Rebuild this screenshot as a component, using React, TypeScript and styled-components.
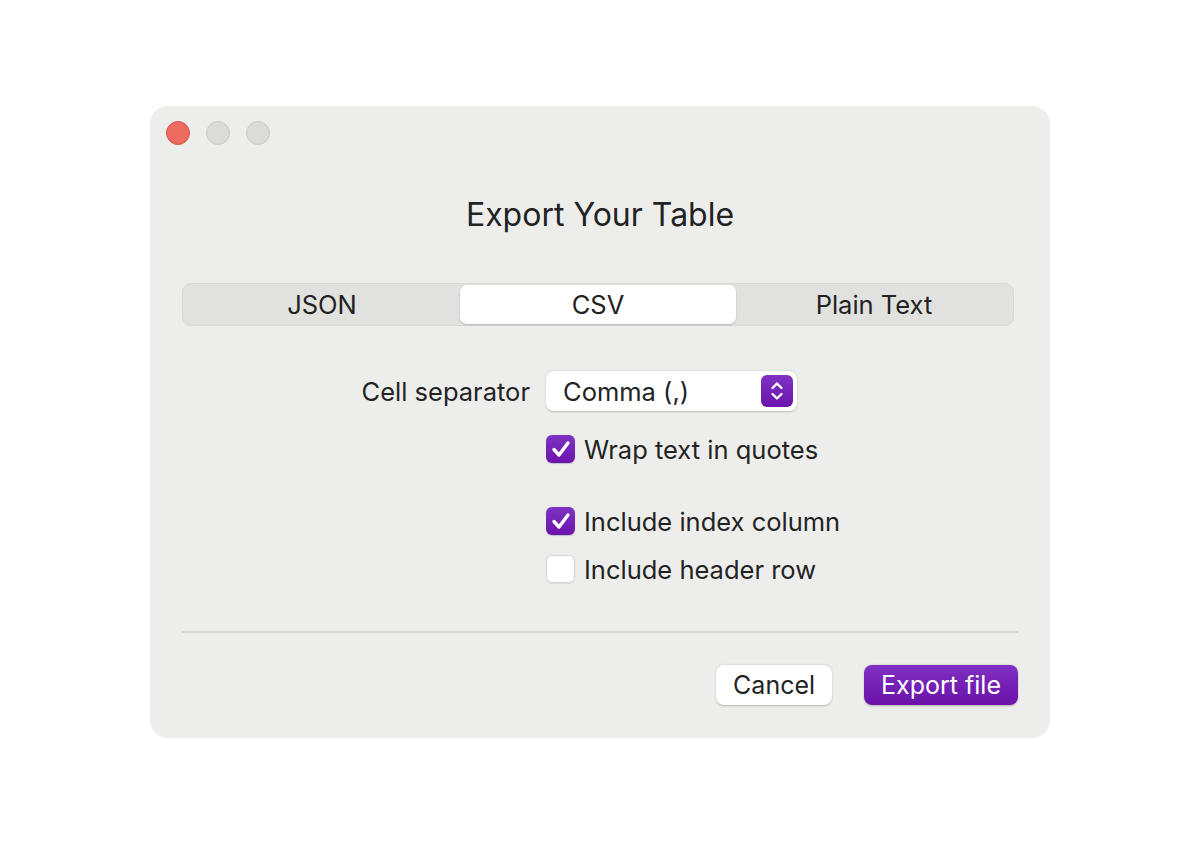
import React, { useState } from "react";
import styled, { createGlobalStyle } from "styled-components";

const Global = createGlobalStyle`
  html, body { margin: 0; padding: 0; background: #ffffff; }
  body { font-family: Inter, "Liberation Sans", sans-serif; color: #232323; }
  * { box-sizing: border-box; }
`;

const Page = styled.div`
  width: 1200px;
  height: 843px;
  display: flex;
  justify-content: center;
  padding-top: 106px;
`;

const Window = styled.div`
  width: 900px;
  height: 632px;
  background: #edeeec;
  border-radius: 18px;
  display: flex;
  flex-direction: column;
  padding: 15px 32px 0 32px;
`;

const TitleBar = styled.div`
  display: flex;
  gap: 16px;
  margin-left: -16px;
`;

const Light = styled.div<{ $color: string; $border: string }>`
  width: 24px;
  height: 24px;
  border-radius: 50%;
  background: ${(p) => p.$color};
  border: 1px solid ${(p) => p.$border};
`;

const Title = styled.h1`
  margin: 52px 0 0 0;
  text-align: center;
  font-size: 32px;
  font-weight: 400;
  line-height: 36px;
  color: #222;
`;

const Segmented = styled.div`
  margin-top: 50px;
  margin-right: 4px;
  height: 43px;
  background: #e1e2e0;
  border: 1px solid #d8d9d7;
  border-radius: 9px;
  display: grid;
  grid-template-columns: 1fr 1fr 1fr;
  padding: 1px;
`;

const Segment = styled.div<{ $active?: boolean }>`
  display: flex;
  align-items: center;
  justify-content: center;
  font-size: 25.5px;
  color: #222;
  border-radius: 7px;
  background: ${(p) => (p.$active ? "#ffffff" : "transparent")};
  box-shadow: ${(p) => (p.$active ? "0 1px 2px rgba(0,0,0,0.18)" : "none")};
  cursor: pointer;
`;

const Form = styled.div`
  margin-top: 45px;
  display: grid;
  grid-template-columns: 348px auto;
  column-gap: 16px;
  align-items: center;
`;

const Label = styled.div`
  font-size: 25.5px;
  text-align: right;
`;

const Select = styled.div`
  width: 251px;
  height: 40px;
  background: #fff;
  border-radius: 8px;
  box-shadow: 0 0.5px 2px rgba(0, 0, 0, 0.22);
  display: flex;
  align-items: center;
  justify-content: space-between;
  padding: 0 4px 0 17px;
  font-size: 25.5px;
`;

const Stepper = styled.div`
  width: 32px;
  height: 32px;
  border-radius: 6px;
  background: linear-gradient(#8032c4, #6c14ab);
  display: flex;
  align-items: center;
  justify-content: center;
`;

const Checks = styled.div`
  grid-column: 2;
  display: flex;
  flex-direction: column;
  margin-top: 24px;
`;

const CheckRow = styled.label<{ $gap?: number }>`
  display: flex;
  align-items: center;
  gap: 9px;
  height: 28px;
  margin-top: ${(p) => p.$gap ?? 0}px;
  font-size: 25.5px;
  cursor: pointer;
`;

const Box = styled.span<{ $on: boolean }>`
  width: 29px;
  height: 28px;
  border-radius: 6px;
  display: flex;
  align-items: center;
  justify-content: center;
  background: ${(p) => (p.$on ? "linear-gradient(#8032c4, #6c14ab)" : "#fff")};
  box-shadow: ${(p) =>
    p.$on ? "0 0.5px 1px rgba(0,0,0,0.2)" : "inset 0 0 0 1px #d4d5d3, 0 0.5px 1px rgba(0,0,0,0.08)"};
`;

const Divider = styled.hr`
  margin: 48px 0 0 0;
  border: 0;
  height: 2px;
  background: #d9dad8;
  width: 836px;
`;

const Footer = styled.div`
  display: flex;
  justify-content: flex-end;
  gap: 32px;
  margin-top: 32px;
`;

const Button = styled.button<{ $primary?: boolean }>`
  height: 40px;
  padding: 0 17px;
  border: 0;
  border-radius: 8px;
  font-family: inherit;
  font-size: 25px;
  color: ${(p) => (p.$primary ? "#fff" : "#222")};
  background: ${(p) => (p.$primary ? "linear-gradient(#7f30c2, #6a12a8)" : "#fff")};
  box-shadow: 0 0.5px 2px rgba(0, 0, 0, 0.25);
  cursor: pointer;
`;

const Check = () => (
  <svg width="20" height="18" viewBox="0 0 20 18">
    <path d="M3 9.5 L8 15 L17 3" fill="none" stroke="#fff" strokeWidth="3.4" strokeLinecap="round" strokeLinejoin="round" />
  </svg>
);

const Chevrons = () => (
  <svg width="16" height="24" viewBox="0 0 16 24">
    <path d="M3.5 9 L8 4.5 L12.5 9 M3.5 15 L8 19.5 L12.5 15" fill="none" stroke="#fff" strokeWidth="2.4" strokeLinecap="round" strokeLinejoin="round" />
  </svg>
);

export default function App() {
  const [tab, setTab] = useState("CSV");
  const [opts, setOpts] = useState({ wrap: true, index: true, header: false });
  const toggle = (k: keyof typeof opts) => setOpts({ ...opts, [k]: !opts[k] });
  return (
    <>
      <Global />
      <Page>
        <Window>
          <TitleBar>
            <Light $color="#ec6a5e" $border="#d6574c" />
            <Light $color="#dbdcda" $border="#c9cac8" />
            <Light $color="#dbdcda" $border="#c9cac8" />
          </TitleBar>
          <Title>Export Your Table</Title>
          <Segmented>
            {["JSON", "CSV", "Plain Text"].map((t) => (
              <Segment key={t} $active={tab === t} onClick={() => setTab(t)}>
                {t}
              </Segment>
            ))}
          </Segmented>
          <Form>
            <Label>Cell separator</Label>
            <Select>
              <span>Comma (,)</span>
              <Stepper>
                <Chevrons />
              </Stepper>
            </Select>
            <Checks>
              <CheckRow onClick={() => toggle("wrap")}>
                <Box $on={opts.wrap}>{opts.wrap && <Check />}</Box>
                Wrap text in quotes
              </CheckRow>
              <CheckRow $gap={44} onClick={() => toggle("index")}>
                <Box $on={opts.index}>{opts.index && <Check />}</Box>
                Include index column
              </CheckRow>
              <CheckRow $gap={20} onClick={() => toggle("header")}>
                <Box $on={opts.header}>{opts.header && <Check />}</Box>
                Include header row
              </CheckRow>
            </Checks>
          </Form>
          <Divider />
          <Footer>
            <Button>Cancel</Button>
            <Button $primary>Export file</Button>
          </Footer>
        </Window>
      </Page>
    </>
  );
}
